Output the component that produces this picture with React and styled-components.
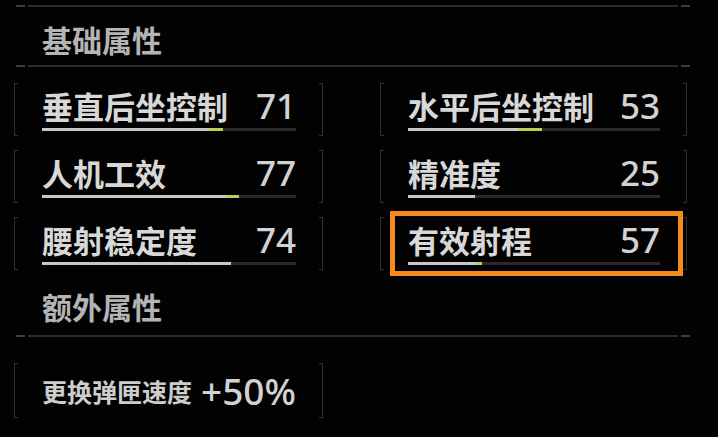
import React from 'react';
import styled, { createGlobalStyle } from 'styled-components';

const GlobalStyle = createGlobalStyle`
  html, body {
    margin: 0;
    padding: 0;
    background: #020202;
  }
  body {
    font-family: 'Noto Sans CJK SC', 'Noto Sans', sans-serif;
  }
`;

// 基础属性：base 是白色进度，bonus 是配件加成（绿色）
const baseStats = [
  { name: '垂直后坐控制', value: 71, base: 65.6, bonus: 5.6 },
  { name: '水平后坐控制', value: 53, base: 43.5, bonus: 9.6 },
  { name: '人机工效', value: 77, base: 72.3, bonus: 5.1 },
  { name: '精准度', value: 25, base: 26.5, bonus: 0 },
  { name: '腰射稳定度', value: 74, base: 74.3, bonus: 0 },
  { name: '有效射程', value: 57, base: 27.5, bonus: 1.8, focus: true },
];

const extraStats = [{ name: '更换弹匣速度', value: '+50%' }];

const Divider = () => (
  <DividerRow>
    <Tick />
    <Line />
    <Tick />
  </DividerRow>
);

const StatCell = ({ stat }) => (
  <Cell>
    <StatRow>
      <Label>{stat.name}</Label>
      <Value>{stat.value}</Value>
    </StatRow>
    <Track>
      <Fill style={{ width: `${stat.base}%` }} />
      {stat.bonus > 0 && <Bonus style={{ width: `${stat.bonus}%` }} />}
    </Track>
    {stat.focus && <Focus />}
  </Cell>
);

const App = () => {
  return (
    <>
      <GlobalStyle />
      <Panel>
        <Divider />
        <Heading $h={58}>基础属性</Heading>
        <Divider />
        <Grid>
          {baseStats.map(stat => (
            <StatCell key={stat.name} stat={stat} />
          ))}
        </Grid>
        <Heading $h={65} $pb={14}>额外属性</Heading>
        <Divider />
        <ExtraList>
          {extraStats.map(stat => (
            <Cell key={stat.name} $h={55}>
              <StatRow>
                <SmallLabel>{stat.name}</SmallLabel>
                <BigValue>{stat.value}</BigValue>
              </StatRow>
            </Cell>
          ))}
        </ExtraList>
      </Panel>
    </>
  );
};

const Panel = styled.div`
  width: 718px;
  height: 437px;
  box-sizing: border-box;
  padding: 5px 28px 0 14px;
  display: flex;
  flex-direction: column;
  overflow: hidden;
`;

const DividerRow = styled.div`
  display: flex;
  align-items: center;
  gap: 3px;
  height: 2px;
  padding-left: 2px;
`;

const Tick = styled.div`
  width: 9px;
  height: 2px;
  background: #3e3e3e;
`;

const Line = styled.div`
  flex: 1;
  height: 2px;
  background: #2c2c2c;
`;

const Heading = styled.div`
  height: ${p => p.$h}px;
  display: flex;
  align-items: flex-end;
  box-sizing: border-box;
  padding: 0 0 ${p => p.$pb || 11}px 28px;
  font-size: 30px;
  line-height: 30px;
  font-weight: 700;
  color: #b4b4b4;
`;

const Grid = styled.div`
  display: grid;
  grid-template-columns: 309px 307px;
  column-gap: 57px;
  row-gap: 14px;
  margin-top: 16px;
`;

const Cell = styled.div`
  position: relative;
  height: ${p => p.$h || 53}px;
  box-sizing: border-box;
  padding: 0 27px 0 28px;
  display: flex;
  flex-direction: column;
  justify-content: center;

  &::before,
  &::after {
    content: '';
    position: absolute;
    top: 0;
    bottom: 0;
    width: 3px;
    border: 1px solid #313131;
  }
  &::before {
    left: 0;
    border-right: none;
  }
  &::after {
    right: 0;
    border-left: none;
  }
`;

const StatRow = styled.div`
  display: flex;
  justify-content: space-between;
  align-items: center;
  height: 36px;
`;

const Label = styled.span`
  font-size: 31px;
  line-height: 36px;
  font-weight: 700;
  color: #d8d8d8;
  white-space: nowrap;
`;

const SmallLabel = styled(Label)`
  font-size: 25px;
  color: #cdcdcd;
`;

const Value = styled.span`
  font-family: 'Noto Sans', 'Liberation Sans', sans-serif;
  font-size: 35px;
  line-height: 36px;
  font-weight: 500;
  color: #d2d2d2;
`;

const BigValue = styled(Value)`
  font-size: 37px;
`;

const Track = styled.div`
  display: flex;
  height: 3px;
  margin-top: 4px;
  background: #2a2a2a;
`;

const Fill = styled.div`
  height: 100%;
  background: #c8c8c8;
`;

const Bonus = styled.div`
  height: 100%;
  background: #b4d35a;
`;

const Focus = styled.div`
  position: absolute;
  left: 10px;
  right: 4px;
  top: -6px;
  bottom: -6px;
  border: 5px solid #f78a1d;
  pointer-events: none;
`;

const ExtraList = styled.div`
  display: grid;
  grid-template-columns: 309px;
  margin-top: 26px;
`;

export default App;
